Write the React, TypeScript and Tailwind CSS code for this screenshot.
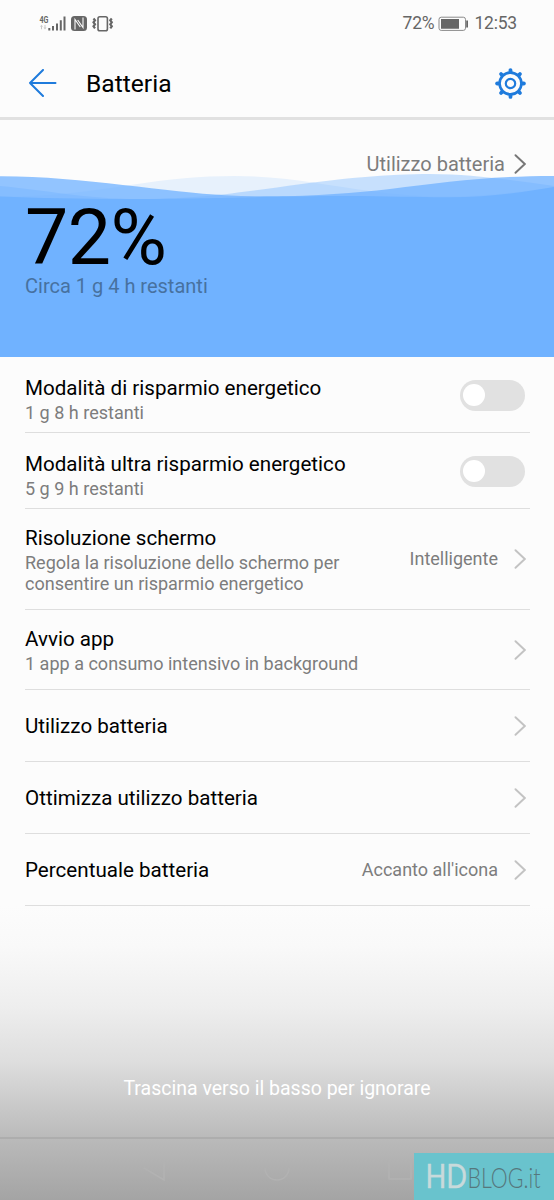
import React from "react";
import clsx from "clsx";

interface Row {
  title: string;
  subtitle?: string;
  value?: string;
  toggle?: boolean;
  className: string;
}

const rows: Row[] = [
  {
    title: "Modalità di risparmio energetico",
    subtitle: "1 g 8 h restanti",
    toggle: true,
    className: "h-[76px]",
  },
  {
    title: "Modalità ultra risparmio energetico",
    subtitle: "5 g 9 h restanti",
    toggle: true,
    className: "h-[76px]",
  },
  {
    title: "Risoluzione schermo",
    subtitle: "Regola la risoluzione dello schermo per consentire un risparmio energetico",
    value: "Intelligente",
    className: "h-[101px]",
  },
  {
    title: "Avvio app",
    subtitle: "1 app a consumo intensivo in background",
    className: "h-20",
  },
  { title: "Utilizzo batteria", className: "h-[72px] pt-px" },
  { title: "Ottimizza utilizzo batteria", className: "h-[72px] pt-px" },
  { title: "Percentuale batteria", value: "Accanto all'icona", className: "h-[72px] pt-px" },
];

const Chevron = ({ className }: { className?: string }) => (
  <svg
    viewBox="0 0 12 20"
    className={clsx("h-5 w-3 shrink-0", className)}
    fill="none"
    stroke="currentColor"
    strokeWidth="1.9"
    strokeLinecap="round"
  >
    <path d="M1.5 1.2 10.8 10 1.5 18.8" />
  </svg>
);

const Toggle = () => (
  <div className="mt-px mr-[5px] flex h-[31px] w-[65px] shrink-0 items-center rounded-full bg-[#e1e1e1] pl-[3px]">
    <div className="size-[22px] rounded-full bg-white" />
  </div>
);

const StatusBar = () => (
  <div className="flex h-[47px] items-center justify-between pr-[37px] pl-[39px] text-[#666]">
    <svg width="76" height="18" viewBox="0 0 76 18" fill="currentColor">
      <text x="0.5" y="7.5" fontSize="8.5" fontWeight="700" fontFamily="Roboto" textLength="9" lengthAdjust="spacingAndGlyphs">
        4G
      </text>
      <g opacity="0.35">
        <path d="M2.5 9.8 4 11.8H1zM6 14.6 4.5 12.6h3zM2 11h1v3.2H2zM5.5 10h1v3h-1z" />
      </g>
      <path d="M9.3 13h2v2.4h-2zM13 11h2v4.4h-2zM17 8.5h2v6.9h-2zM20.8 5.2h2v10.2h-2zM24.5 1.5h2v13.9h-2z" />
      <rect x="32" y="1" width="16" height="15" rx="3.5" />
      <path d="M36 14.5v-10L41.300 12M44 2.500v10L38.700 5" stroke="#fbfbfb" strokeWidth="1.1" fill="none" />
      <rect x="59" y="1.7" width="9.4" height="14" rx="1.8" stroke="currentColor" strokeWidth="1.6" fill="none" />
      <path
        d="m54.500 3.500 1.500 1.800-1.500 2 1.500 2-1.500 2 1.500 2M72.800 3.500 71.300 5.300l1.500 2-1.500 2 1.500 2-1.500 2"
        stroke="currentColor"
        strokeWidth="2.2"
        fill="none"
      />
    </svg>
    <div className="flex items-center text-[17.5px] leading-none">
      <span className="pt-px tracking-[-0.2px]">72%</span>
      <svg width="31" height="16" viewBox="0 0 31 16" className="mr-[5px] ml-1">
        <rect x="1" y="1.2" width="26.5" height="13.2" rx="2.2" fill="none" stroke="#8a8a8a" strokeWidth="1" />
        <path d="M3 3h18v9.8H3zM28.2 4.5H30v7h-1.8z" fill="#666" />
      </svg>
      <span className="pt-px tracking-[-0.2px]">12:53</span>
    </div>
  </div>
);

const Header = () => (
  <header className="flex h-[73px] items-center border-b-[3px] border-[#e1e1e1] pt-0.5 pr-7 pl-7">
    <svg
      width="29"
      height="28"
      viewBox="0 0 29 28"
      fill="none"
      stroke="#1f7bdc"
      strokeWidth="2"
      strokeLinecap="round"
      strokeLinejoin="round"
    >
      <path d="M15 1 2 14l13 13M2 14h25.5" />
    </svg>
    <h1 className="ml-[29px] flex-1 pt-0.5 text-[24.6px] leading-none">Batteria</h1>
    <svg width="31" height="31" viewBox="-15.5 -15.5 31 31" fill="none" stroke="#1f7bdc">
      <circle r="10.9" strokeWidth="2.6" />
      <circle r="4.7" strokeWidth="2.2" />
      <g strokeWidth="3.8" strokeLinecap="round">
        {[0, 45, 90, 135, 180, 225, 270, 315].map((angle) => (
          <path key={angle} d="M0-12.2v-1.2" transform={`rotate(${angle})`} />
        ))}
      </g>
    </svg>
  </header>
);

const BatteryLevel = () => (
  <section className="flex h-[237px] flex-col">
    <div className="relative z-10 flex h-[52px] items-center justify-end pt-[35px] pr-7">
      <span className="text-xl leading-5 text-[#7c7c7c]">Utilizzo batteria</span>
      <Chevron className="ml-[9px] text-[#777]" />
    </div>
    {/* Waves */}
    <svg viewBox="0 172 554 30" className="h-[30px] w-full shrink-0" fill="#70b2ff">
      <path
        opacity="0.15"
        d="M0 196.500C50 197 90 191 130 185C170 179 200 176 235 176C285 176 325 185 370 191C430 199 475 199 554 187V203H0Z"
      />
      <path
        opacity="0.38"
        d="M0 186C45 190 85 199 140 199C200 199 240 192 277 187.500C340 178 390 174 430 174C475 174 515 181 554 186V203H0Z"
      />
      <path
        opacity="0.76"
        d="M0 176.300C80 176 170 193 225 195.200C290 198.500 345 194 390 189C445 182 490 176 554 176V203H0Z"
      />
      <path d="M0 196.500C40 198 85 199.200 140 199C230 198 270 196.500 300 196.600C370 195 410 197.500 450 197.300C490 197 525 192 554 187V203H0Z" />
    </svg>
    <div className="-mt-0.5 flex-1 bg-[#70b2ff] pl-[25px]">
      <p className="text-[77px] leading-[76px] tracking-[-0.5px]">72%</p>
      <p className="-mt-0.5 text-xl leading-6 text-[#47719f]">Circa 1 g 4 h restanti</p>
    </div>
  </section>
);

const SettingRow = ({ title, subtitle, value, toggle, className }: Row) => (
  <li className={clsx("flex items-center border-b border-[#dedede]", className)}>
    <div className={clsx("flex-1", toggle && "pt-[9px]")}>
      <p className="text-[20.6px] leading-[26px]">{title}</p>
      {subtitle && (
        <p className="max-w-[345px] pt-px text-[18.05px] leading-[21px] text-[#7d7d7d]">{subtitle}</p>
      )}
    </div>
    {value && <span className="text-lg leading-none text-[#7d7d7d]">{value}</span>}
    {toggle ? <Toggle /> : <Chevron className="mr-1 ml-4 text-[#c3c3c3]" />}
  </li>
);

export default function App() {
  return (
    <div className="relative flex h-[1200px] w-[554px] flex-col overflow-hidden bg-[#fcfcfc] font-[Roboto,sans-serif] text-black">
      <StatusBar />
      <Header />
      <BatteryLevel />
      <ul className="pr-6 pl-[25px]">
        {rows.map((row) => (
          <SettingRow key={row.title} {...row} />
        ))}
      </ul>
      <footer className="flex flex-1 flex-col bg-[linear-gradient(to_bottom,#fcfcfc_0px,#f9f9f9_40px,#eeeeee_100px,#dedede_155px,#bababa_232px,#a4a4a4_294px)]">
        <p className="mt-[171px] text-center text-[19.5px] leading-6 text-white">
          Trascina verso il basso per ignorare
        </p>
        <div className="mt-9 flex-1 border-t-2 border-[#adadad]">
          <svg viewBox="0 0 554 60" className="h-[60px] w-full" fill="none" stroke="#b2b2b2" strokeWidth="1.5">
            <path d="M164 22v19l-20-12M265 29a12 12 0 0 0 24 0M389 22v18h22V22" />
          </svg>
        </div>
      </footer>
      {/* Watermark */}
      <div className="absolute right-0 bottom-0 h-[47px] w-[140px] bg-[#69c3cd]">
        <svg viewBox="0 0 140 47" className="h-full w-full" fontFamily="Lato, sans-serif">
          <text
            x="11.5"
            y="35"
            fontSize="32"
            fill="#c8dadb"
            stroke="#c8dadb"
            strokeWidth="0.4"
            textLength="41.5"
            lengthAdjust="spacingAndGlyphs"
          >
            HD
          </text>
          <text x="53.5" y="35" fontSize="26.5" fontWeight="300" fill="#56777c" textLength="73" lengthAdjust="spacingAndGlyphs">
            BLOG.it
          </text>
        </svg>
      </div>
    </div>
  );
}
